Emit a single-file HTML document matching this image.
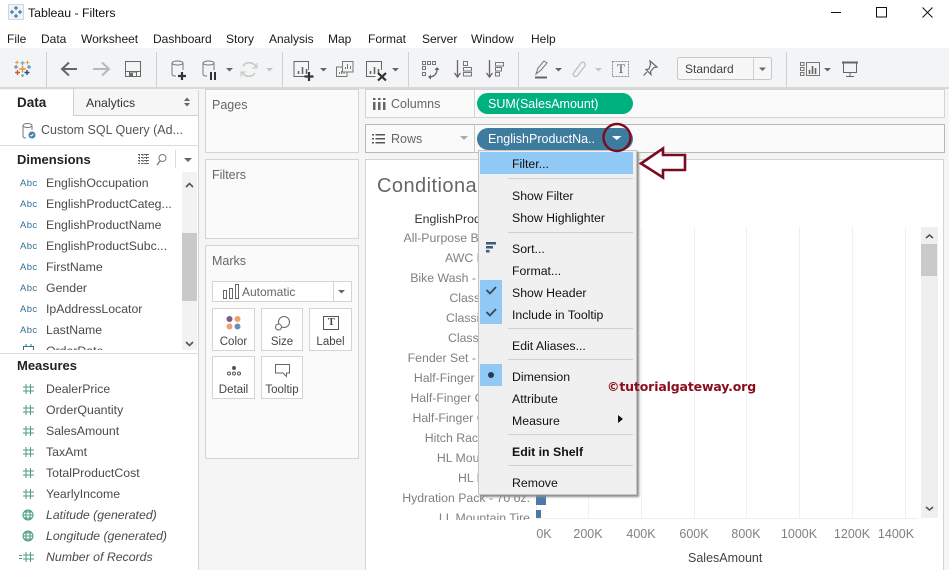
<!DOCTYPE html>
<html><head><meta charset="utf-8"><title>Tableau - Filters</title>
<style>
html,body{margin:0;padding:0;background:#fff}
#r{position:relative;width:949px;height:570px;overflow:hidden;background:#f5f5f5;font-family:"Liberation Sans",sans-serif;font-size:12.5px;color:#333}
.t{position:absolute;white-space:nowrap;line-height:16px;height:16px}
.b{position:absolute;box-sizing:border-box}
.card{position:absolute;box-sizing:border-box;background:#fafafa;border:1px solid #d4d4d4}
.m{color:#1a1a1a;font-size:12px}
.d{color:#4a4a4a;font-size:12.3px}
.a{color:#336f95;font-size:9.5px;font-weight:normal;letter-spacing:.4px;margin-top:1px}
.g{color:#808080;font-size:12.5px}
.lab{position:absolute;right:0;white-space:nowrap;line-height:16px;color:#808080;font-size:12.3px}
.sep{position:absolute;left:508px;width:125px;height:1px;background:#d0d0d0}
.mi{position:absolute;left:512px;white-space:nowrap;line-height:16px;color:#111;font-size:12.3px;margin-top:1px}
.chk{position:absolute;left:480px;width:22px;height:22px;background:#90c8f6}
.grid{position:absolute;top:227px;width:1px;height:291px;background:#f0f0f0}
.tick{position:absolute;top:526px;width:60px;text-align:center;line-height:16px;color:#808080;font-size:12.5px}
svg{position:absolute;overflow:visible}
.mk{position:absolute;box-sizing:border-box;width:43px;height:43px;background:#fff;border:1px solid #d4d4d4}
.mkl{position:absolute;left:0;right:0;top:26px;text-align:center;line-height:14px;font-size:11.500px;color:#444}
</style></head><body><div id="r">

<!-- title bar -->
<div class="b" style="left:0;top:0;width:949px;height:48px;background:#fff"></div>
<svg style="left:8px;top:4px" width="16" height="16" viewBox="0 0 16 16"><rect x=".5" y=".5" width="15" height="15" fill="#eef3f8" stroke="#cfd6dc"/><path d="M8 2v4M6 4h4M8 10v4M6 12h4M2 8h4M4 6v4M10 8h4M12 6v4" stroke="#3f76a8" stroke-width="1.2" fill="none"/></svg>
<div class="t" style="left:28px;top:5px;color:#111;font-size:12.300px">Tableau - Filters</div>
<svg style="left:0;top:0" width="949" height="24"><path d="M831 12.500h10" stroke="#111"/><rect x="876.500" y="7.500" width="10" height="9.500" fill="none" stroke="#111"/><path d="M922.500 7.500l10 10M932.500 7.500l-10 10" stroke="#111"/></svg>

<!-- menu -->
<div class="t m" style="left:7px;top:31px">File</div>
<div class="t m" style="left:41px;top:31px">Data</div>
<div class="t m" style="left:81px;top:31px">Worksheet</div>
<div class="t m" style="left:153px;top:31px">Dashboard</div>
<div class="t m" style="left:226px;top:31px">Story</div>
<div class="t m" style="left:269px;top:31px">Analysis</div>
<div class="t m" style="left:328px;top:31px">Map</div>
<div class="t m" style="left:368px;top:31px">Format</div>
<div class="t m" style="left:422px;top:31px">Server</div>
<div class="t m" style="left:471px;top:31px">Window</div>
<div class="t m" style="left:531px;top:31px">Help</div>

<!-- toolbar -->
<div class="b" style="left:0;top:48px;width:949px;height:41px;background:#f3f4f5;border-bottom:2px solid #d8d8d8"></div>
<svg style="left:0;top:48px" width="949" height="40" viewBox="0 48 949 40" fill="none">
<g stroke="#d0d0d0"><path d="M46.500 52v35M156.500 52v35M282.500 52v35M408.500 52v35M518.500 52v35M786.500 52v35"/></g>
<!-- logo -->
<path d="M22.500 61v4M20.500 63h4" stroke="#7e9fbd" stroke-width="1.2"/><path d="M22.500 74v3M21 75.500h3" stroke="#7e9fbd" stroke-width="1.2"/>
<path d="M16 65v4M14 67h4M29 65v4M27 67h4" stroke="#5f8fb8" stroke-width="1.2"/>
<path d="M17.500 70v5M15 72.500h5" stroke="#c8602a" stroke-width="1.4"/><path d="M27 70v5M24.500 72.500h5" stroke="#1f4d8f" stroke-width="1.4"/>
<path d="M22.500 65.500v7M19 69h7" stroke="#e8963c" stroke-width="1.5"/><path d="M17 60.500v4M15 62.500h4M27.500 60.500v4M25.500 62.500h4" stroke="#e8a050" stroke-width="1.1"/>
<!-- back/forward -->
<path d="M77 69H63M69 62.500l-7 6.500 7 6.500" stroke="#666" stroke-width="2"/>
<path d="M93 69h15M102 62.500l7 6.500-7 6.500" stroke="#b8b8b8" stroke-width="2"/>
<!-- save -->
<path d="M125.500 61.500h15v15h-15z M125.500 71.500h15" stroke="#6a6a6a"/><path d="M129.500 76v-4h7v4" stroke="#6a6a6a"/><rect x="130" y="73" width="3" height="3" fill="#6a6a6a"/>
<!-- add datasource -->
<ellipse cx="177.500" cy="63" rx="5.500" ry="2" stroke="#777"/><path d="M172 63v11q0 2 3 2h1M183 63v7" stroke="#777"/>
<path d="M182 72v8M178 76h8" stroke="#333" stroke-width="2.200"/>
<!-- pause ds -->
<ellipse cx="208.500" cy="63" rx="5.500" ry="2" stroke="#777"/><path d="M203 63v11q0 2 3 2h1M214 63v7" stroke="#777"/>
<path d="M211 72v8M215 72v8" stroke="#333" stroke-width="2"/>
<path d="M226 68h7l-3.500 3.500z" fill="#666"/>
<!-- refresh -->
<path d="M243 66a7.500 7.500 0 0 1 13 1M255 73a7.500 7.500 0 0 1-13-1" stroke="#c4c4c4" stroke-width="1.500"/><path d="M257 63v5h-5M241 77v-5h5" stroke="#c4c4c4"/>
<path d="M266 68h7l-3.500 3.500z" fill="#c4c4c4"/>
<!-- new sheet -->
<path d="M308.500 70v-8.500h-14.500v15h11" stroke="#666"/><path d="M298.500 74v-3M302.500 74v-7M306.500 74v-5" stroke="#666" stroke-width="1.600"/>
<path d="M309 72v9M304.500 76.500h9" stroke="#333" stroke-width="2.200"/>
<path d="M320 68h7l-3.500 3.500z" fill="#666"/>
<!-- duplicate -->
<path d="M342.500 61.500h10.500v10.500h-10.500z" stroke="#777"/><path d="M345.500 69v-2M347.500 69v-5M350.500 69v-3" stroke="#777"/>
<path d="M342 67h-5.500v9.500h10.500v-4" stroke="#777"/><path d="M339.500 74v-2M341.500 74v-3M344 74v-2" stroke="#777"/>
<!-- clear -->
<path d="M381.500 70v-8.500h-15v15h9" stroke="#666"/><path d="M370.500 74v-3M374.500 74v-7M378.500 74v-5" stroke="#666" stroke-width="1.600"/>
<path d="M378 73l8 7.500M386 73l-8 7.500" stroke="#333" stroke-width="2.200"/>
<path d="M392 68h7l-3.500 3.500z" fill="#666"/>
<!-- swap -->
<g stroke="#777"><rect x="422.500" y="61.500" width="3" height="3"/><rect x="427.500" y="61.500" width="3" height="3"/><rect x="432.500" y="61.500" width="3" height="3"/><rect x="422.500" y="66.500" width="3" height="3"/><rect x="422.500" y="72.500" width="3" height="3"/></g>
<path d="M437 69q0 7-7 8" stroke="#666" stroke-width="1.300"/><path d="M434.500 70l2.500-3 2.500 3zM431 74.500l-3 2.500 3 2.500z" fill="#666"/>
<!-- sort -->
<path d="M457.500 60v17M454.500 73l3 4 3-4" stroke="#666" stroke-width="1.300"/><rect x="463.500" y="61.500" width="4" height="4" stroke="#777"/><rect x="463.500" y="67.500" width="8" height="3.500" stroke="#777"/><rect x="463.500" y="72.500" width="8" height="3.500" stroke="#777"/>
<path d="M489.500 60v17M486.500 73l3 4 3-4" stroke="#666" stroke-width="1.300"/><rect x="495.500" y="62.500" width="8" height="3.500" stroke="#777"/><rect x="495.500" y="67.500" width="6" height="3.500" stroke="#777"/><rect x="495.500" y="72.500" width="4" height="3.500" stroke="#777"/>
<!-- highlight -->
<path d="M536 74l2-6 6-7 3 2-6 7z" stroke="#777"/><path d="M535 77.500h12" stroke="#666" stroke-width="2"/>
<path d="M555 68h7l-3.500 3.500z" fill="#666"/>
<!-- clip -->
<path d="M575 71l6-8q2-2 3.500 0t0 3.500l-7 9q-2 2-3.500 .5t0-3.500l6-8" stroke="#bdbdbd" stroke-width="1.200"/>
<path d="M595 68h7l-3.500 3.500z" fill="#c4c4c4"/>
<!-- text -->
<rect x="612.500" y="61.500" width="16" height="15" stroke="#8a8a8a" stroke-dasharray="2 1"/>
<!-- pin -->
<path d="M650 61l7 6-3 .5-3.500 4 .5 3-5-5 3-.5 1.500-4.500zM647 72l-3.500 3.500" stroke="#666" stroke-width="1.200"/>
<!-- dropdown -->
<rect x="677.500" y="57.500" width="94" height="22" rx="2" fill="#f7f7f7" stroke="#c8c8c8"/><path d="M753.500 58v21" stroke="#d0d0d0"/><path d="M759 67.500h7l-3.500 3.500z" fill="#666"/>
<!-- show me -->
<g stroke="#777"><rect x="800.500" y="62.500" width="3.500" height="3"/><rect x="800.500" y="67.500" width="3.500" height="3"/><rect x="800.500" y="72.500" width="3.500" height="3"/><rect x="806.500" y="62.500" width="13" height="13"/></g>
<path d="M809.500 74v-4M812.500 74v-8M815.500 74v-6" stroke="#666" stroke-width="1.600"/>
<path d="M824 68h7l-3.500 3.500z" fill="#666"/>
<!-- present -->
<path d="M842 62.500h16" stroke="#666" stroke-width="2"/><path d="M843.500 63v9.500h13V63M850 72.500v4.500M846 76.500h8" stroke="#666"/>
</svg>
<div class="t" style="top:61px;width:20px;font:13px 'Liberation Serif',serif;line-height:16px;color:#555;left:617px;">T</div>
<div class="t" style="left:685px;top:61px;font-size:12px;color:#444">Standard</div>

<!-- left pane -->
<div class="b" style="left:0;top:90px;width:199px;height:480px;background:#fff;border-right:1px solid #d4d4d4"></div>
<div class="b" style="left:73px;top:89px;width:125px;height:27px;background:#f6f6f6;border-left:1px solid #d0d0d0;border-bottom:1px solid #d0d0d0"></div>
<div class="t" style="left:17px;top:95px;font-weight:bold;font-size:13.500px;color:#222">Data</div>
<div class="t" style="left:86px;top:95px;font-size:12.300px;color:#333">Analytics</div>
<svg style="left:184px;top:97px" width="8" height="10"><path d="M0 4l3 -3.500 3 3.500zM0 6l3 3.500 3-3.500z" fill="#666"/></svg>
<svg style="left:22px;top:123px" width="14" height="16" fill="none"><ellipse cx="5.500" cy="2.500" rx="4.500" ry="2" stroke="#777"/><path d="M1 3v10q0 2 3 2M10 3v4" stroke="#777"/><circle cx="10" cy="12" r="3.500" fill="#3f84b5"/><path d="M8.500 12l1 1 2-2" stroke="#fff"/></svg>
<div class="t" style="left:41px;top:122px;color:#555;font-size:12.500px">Custom SQL Query (Ad...</div>
<div class="b" style="left:0;top:145px;width:198px;height:1px;background:#ddd"></div>
<div class="t" style="left:17px;top:152px;font-weight:bold;font-size:13px;color:#222">Dimensions</div>
<svg style="left:138px;top:153px" width="56" height="14" fill="none"><path d="M0 1.500h12M0 4.500h12M0 7.500h12M0 10.500h12M1.500 1v10M5 1v10M8.500 1v10" stroke="#666" stroke-dasharray="2 1"/><circle cx="24.500" cy="5" r="3.500" stroke="#777"/><path d="M22 8l-3 4" stroke="#777" stroke-width="1.300"/><path d="M37.500 -3v18" stroke="#ddd"/><path d="M46 5h8l-4 4z" fill="#666"/></svg>

<div style="position:absolute;left:0;top:172px;width:182px;height:178px;overflow:hidden">
<div class="t a" style="left:20px;top:3px">Abc</div><div class="t d" style="left:46px;top:3px">EnglishOccupation</div>
<div class="t a" style="left:20px;top:24px">Abc</div><div class="t d" style="left:46px;top:24px">EnglishProductCateg...</div>
<div class="t a" style="left:20px;top:45px">Abc</div><div class="t d" style="left:46px;top:45px">EnglishProductName</div>
<div class="t a" style="left:20px;top:66px">Abc</div><div class="t d" style="left:46px;top:66px">EnglishProductSubc...</div>
<div class="t a" style="left:20px;top:87px">Abc</div><div class="t d" style="left:46px;top:87px">FirstName</div>
<div class="t a" style="left:20px;top:108px">Abc</div><div class="t d" style="left:46px;top:108px">Gender</div>
<div class="t a" style="left:20px;top:129px">Abc</div><div class="t d" style="left:46px;top:129px">IpAddressLocator</div>
<div class="t a" style="left:20px;top:150px">Abc</div><div class="t d" style="left:46px;top:150px">LastName</div>
<div class="t d" style="left:46px;top:171px">OrderDate</div>
<svg style="left:23px;top:172px" width="12" height="6" fill="none"><rect x=".5" y="2.500" width="10" height="8" stroke="#336f95"/><path d="M3 0v3M8 0v3" stroke="#336f95"/></svg>
</div>
<div class="b" style="left:182px;top:172px;width:15px;height:178px;background:#f2f2f2"></div>
<div class="b" style="left:182px;top:233px;width:15px;height:68px;background:#c9c9c9"></div>
<svg style="left:182px;top:172px" width="15" height="178" fill="none"><path d="M4 15l3.500-3.500L11 15M4 170l3.500 3.500L11 170" stroke="#555" stroke-width="1.600"/></svg>

<div class="b" style="left:0;top:353px;width:198px;height:1px;background:#ddd"></div>
<div class="t" style="left:17px;top:358px;font-weight:bold;font-size:13px;color:#222">Measures</div>
<svg style="left:0;top:380px" width="44" height="190" fill="none" stroke="#4a9c7c">
<g id="h"><path d="M26 4v10M30.500 4v10M23 7h11M23 11h11"/></g>
<use href="#h" y="21"/><use href="#h" y="42"/><use href="#h" y="63"/><use href="#h" y="84"/><use href="#h" y="105"/>
<g id="w"><circle cx="28" cy="135" r="5"/><ellipse cx="28" cy="135" rx="2.200" ry="5"/><path d="M23 135h10M24 132h8M24 138h8"/></g>
<use href="#w" y="21"/>
<use href="#h" y="168"/><path d="M19 175.500h3M19 178.500h3"/>
</svg>
<div class="t d" style="left:46px;top:381px">DealerPrice</div>
<div class="t d" style="left:46px;top:402px">OrderQuantity</div>
<div class="t d" style="left:46px;top:423px">SalesAmount</div>
<div class="t d" style="left:46px;top:444px">TaxAmt</div>
<div class="t d" style="left:46px;top:465px">TotalProductCost</div>
<div class="t d" style="left:46px;top:486px">YearlyIncome</div>
<div class="t d" style="left:46px;top:507px;font-style:italic">Latitude (generated)</div>
<div class="t d" style="left:46px;top:528px;font-style:italic">Longitude (generated)</div>
<div class="t d" style="left:46px;top:549px;font-style:italic">Number of Records</div>

<!-- middle cards -->
<div class="card" style="left:205px;top:89px;width:154px;height:64px"></div>
<div class="t g" style="left:212px;top:97px;color:#666">Pages</div>
<div class="card" style="left:205px;top:159px;width:154px;height:80px"></div>
<div class="t g" style="left:212px;top:167px;color:#666">Filters</div>
<div class="card" style="left:205px;top:245px;width:154px;height:214px"></div>
<div class="t g" style="left:212px;top:253px;color:#666">Marks</div>
<div class="b" style="left:212px;top:281px;width:140px;height:21px;background:#fff;border:1px solid #d4d4d4"></div>
<svg style="left:212px;top:281px" width="140" height="21" fill="none"><path d="M11.500 9.500h3v8h-3zM17.500 7.500h3v10h-3zM23.500 3.500h3v14h-3z" stroke="#666"/><path d="M121.500 0v21" stroke="#d4d4d4"/><path d="M126 9h7l-3.500 3.500z" fill="#666"/></svg>
<div class="t" style="left:242px;top:284px;font-size:12px;color:#666">Automatic</div>

<div class="mk" style="left:212px;top:308px"><div class="mkl">Color</div><svg style="left:12px;top:6px" width="18" height="16"><circle cx="4.500" cy="4" r="3" fill="#7d5a8c"/><circle cx="12.500" cy="4" r="3" fill="#f0a06c"/><circle cx="4.500" cy="11.500" r="3" fill="#f0a06c"/><circle cx="12.500" cy="11.500" r="3" fill="#6a8fb5"/></svg></div>
<div class="mk" style="left:261px;top:308px;width:42px"><div class="mkl">Size</div><svg style="left:13px;top:6px" width="18" height="16" fill="none" stroke="#666"><circle cx="9" cy="7" r="5.500"/><circle cx="3.500" cy="12" r="3" fill="#fff"/></svg></div>
<div class="mk" style="left:309px;top:308px"><div class="mkl">Label</div><svg style="left:13px;top:7px" width="16" height="14" fill="none"><rect x=".5" y=".5" width="15" height="13" stroke="#555"/></svg><div class="t" style="left:18px;top:6px;font:10px 'Liberation Serif',serif;line-height:16px;color:#444;font-weight:bold">T</div></div>
<div class="mk" style="left:212px;top:356px"><div class="mkl">Detail</div><svg style="left:13px;top:8px" width="16" height="12" fill="none" stroke="#555"><circle cx="8" cy="3" r="1.500" fill="#555"/><circle cx="3" cy="8.500" r="1.500"/><circle cx="8" cy="8.500" r="1.500"/><circle cx="13" cy="8.500" r="1.500"/></svg></div>
<div class="mk" style="left:261px;top:356px;width:42px"><div class="mkl">Tooltip</div><svg style="left:13px;top:7px" width="16" height="14" fill="none" stroke="#666"><path d="M.5 .5h14v8.500h-3v3.500l-3.500-3.500h-7.500z"/></svg></div>

<!-- shelves -->
<div class="card" style="left:365px;top:89px;width:580px;height:29px"></div>
<div class="b" style="left:474px;top:89px;width:1px;height:29px;background:#d4d4d4"></div>
<svg style="left:373px;top:98px" width="14" height="12"><path d="M0 4h2.500v8H0zM5 4h2.500v8H5zM10 4h2.500v8H10zM0 0h2.500v2H0zM5 0h2.500v2H5zM10 0h2.500v2H10z" fill="#666"/></svg>
<div class="t g" style="left:391px;top:96px;color:#666">Columns</div>
<div class="b" style="left:477px;top:93px;width:156px;height:21px;background:#00b180;border-radius:11px"></div>
<div class="t" style="left:488px;top:96px;color:#fff;font-size:12.500px">SUM(SalesAmount)</div>

<div class="card" style="left:365px;top:124px;width:580px;height:29px;border-color:#b8b8b8"></div>
<div class="b" style="left:474px;top:124px;width:1px;height:29px;background:#c8c8c8"></div>
<svg style="left:372px;top:133px" width="13" height="11"><path d="M0 1h2v1.500H0zM3.500 1H13v1.500H3.500zM0 5h2v1.500H0zM3.500 5H13v1.500H3.500zM0 9h2v1.500H0zM3.500 9H13v1.500H3.500z" fill="#555"/></svg>
<div class="t g" style="left:391px;top:131px;color:#666">Rows</div>
<svg style="left:460px;top:136px" width="9" height="5"><path d="M0 0h8l-4 4z" fill="#aaa"/></svg>
<div class="b" style="left:477px;top:128px;width:156px;height:22px;background:#3e7c9e;border-radius:11px"></div>
<div class="t" style="left:488px;top:131px;color:#fff;font-size:12.500px">EnglishProductNa..</div>

<!-- viz -->
<div class="b" style="left:365px;top:159px;width:579px;height:411px;background:#fff;border:1px solid #d4d4d4;border-bottom:0"></div>
<div class="t" style="left:377px;top:174px;font-size:20px;letter-spacing:.45px;line-height:24px;height:24px;color:#666">Conditional</div>

<div style="position:absolute;left:370px;top:210px;width:160px;height:310px;overflow:hidden;">
<div class="lab" style="top:1px;color:#333;font-weight:normal">EnglishProductName</div>
<div class="lab" style="top:20px">All-Purpose Bike Stand</div>
<div class="lab" style="top:40px">AWC Logo Cap</div>
<div class="lab" style="top:60px">Bike Wash - Dissolver</div>
<div class="lab" style="top:80px">Classic Vest, L</div>
<div class="lab" style="top:100px">Classic Vest, M</div>
<div class="lab" style="top:120px">Classic Vest, S</div>
<div class="lab" style="top:140px">Fender Set - Mountain</div>
<div class="lab" style="top:160px">Half-Finger Gloves, L</div>
<div class="lab" style="top:180px">Half-Finger Gloves, M</div>
<div class="lab" style="top:200px">Half-Finger Gloves, S</div>
<div class="lab" style="top:220px">Hitch Rack - 4-Bike</div>
<div class="lab" style="top:240px">HL Mountain Tire</div>
<div class="lab" style="top:260px">HL Road Tire</div>
<div class="lab" style="top:280px">Hydration Pack - 70 oz.</div>
<div class="lab" style="top:300px">LL Mountain Tire</div>
</div>

<div class="grid" style="left:536px;background:#eee"></div><div class="grid" style="left:588px"></div><div class="grid" style="left:641px"></div><div class="grid" style="left:694px"></div><div class="grid" style="left:746px"></div><div class="grid" style="left:799px"></div><div class="grid" style="left:852px"></div><div class="grid" style="left:905px"></div>
<div class="b" style="left:536px;top:518px;width:381px;height:1px;background:#eee"></div>
<div class="b" style="left:536px;top:495px;width:10px;height:10px;background:#4e79a7"></div>
<div class="b" style="left:536px;top:510px;width:5px;height:8px;background:#4e79a7"></div>
<div class="tick" style="left:514px">0K</div><div class="tick" style="left:558px">200K</div><div class="tick" style="left:611px">400K</div><div class="tick" style="left:664px">600K</div><div class="tick" style="left:716px">800K</div><div class="tick" style="left:769px">1000K</div><div class="tick" style="left:822px">1200K</div><div class="tick" style="left:866px">1400K</div>
<div class="t" style="left:688px;top:550px;color:#444;font-size:12.500px">SalesAmount</div>

<div class="b" style="left:921px;top:227px;width:17px;height:291px;background:#efefef"></div>
<div class="b" style="left:921px;top:244px;width:16px;height:32px;background:#cacaca"></div>
<svg style="left:921px;top:227px" width="17" height="291" fill="none"><path d="M5 11l3.500-3L12 11M5 280l3.500 3 3.500-3" stroke="#555" stroke-width="1.600"/></svg>

<!-- context menu -->
<div class="b" style="left:478px;top:150px;width:159px;height:345px;background:#f0f0f0;border:1px solid #c4c4c4;box-shadow:2px 2px 2px #8c8c8c"></div>
<div class="b" style="left:480px;top:152px;width:153px;height:22px;background:#90c8f6"></div>
<div class="mi" style="top:155px">Filter...</div>
<div class="sep" style="top:178px"></div>
<div class="mi" style="top:187px">Show Filter</div>
<div class="mi" style="top:209px">Show Highlighter</div>
<div class="sep" style="top:232px"></div>
<svg style="left:486px;top:242px" width="11" height="11"><path d="M0 0h10v2.500H0zM0 4h7v2.500H0zM0 8h3.500v2.500H0z" fill="#3d5a78"/></svg>
<div class="mi" style="top:240px">Sort...</div>
<div class="mi" style="top:262px">Format...</div>
<div class="chk" style="top:280px"></div><div class="chk" style="top:302px"></div>
<svg style="left:486px;top:286px" width="11" height="34" fill="none"><path d="M.5 4l3.500 3.500L10 1M.5 26l3.500 3.500L10 23" stroke="#33475b" stroke-width="1.800"/></svg>
<div class="mi" style="top:284px">Show Header</div>
<div class="mi" style="top:306px">Include in Tooltip</div>
<div class="sep" style="top:328px"></div>
<div class="mi" style="top:337px">Edit Aliases...</div>
<div class="sep" style="top:359px"></div>
<div class="chk" style="top:364px"></div>
<div class="b" style="left:488px;top:372px;width:6px;height:6px;border-radius:50%;background:#2b3a4a"></div>
<div class="mi" style="top:368px">Dimension</div>
<div class="mi" style="top:390px">Attribute</div>
<div class="mi" style="top:412px">Measure</div>
<svg style="left:618px;top:415px" width="6" height="9"><path d="M0 0l5 4-5 4z" fill="#111"/></svg>
<div class="sep" style="top:434px"></div>
<div class="mi" style="top:443px;font-weight:bold">Edit in Shelf</div>
<div class="sep" style="top:465px"></div>
<div class="mi" style="top:474px">Remove</div>

<!-- watermark above the menu -->
<div class="t" style="left:607px;top:379px;font-family:'DejaVu Sans',sans-serif;font-weight:bold;font-size:12.500px;letter-spacing:-.15px;color:#8b0d1c">©tutorialgateway.org</div>

<!-- annotations -->
<svg style="left:0;top:0" width="949" height="570" fill="none">
<path d="M612 136h9.500l-4.750 4z" fill="#fff"/>
<circle cx="617" cy="137.500" r="13.500" stroke="#7a0c20" stroke-width="2.400"/>
<path d="M641 163.500l22-15v6.500h22v15h-22v7.500z" stroke="#7a0c20" stroke-width="2.600" fill="#fff"/>
</svg>
</div></body></html>
